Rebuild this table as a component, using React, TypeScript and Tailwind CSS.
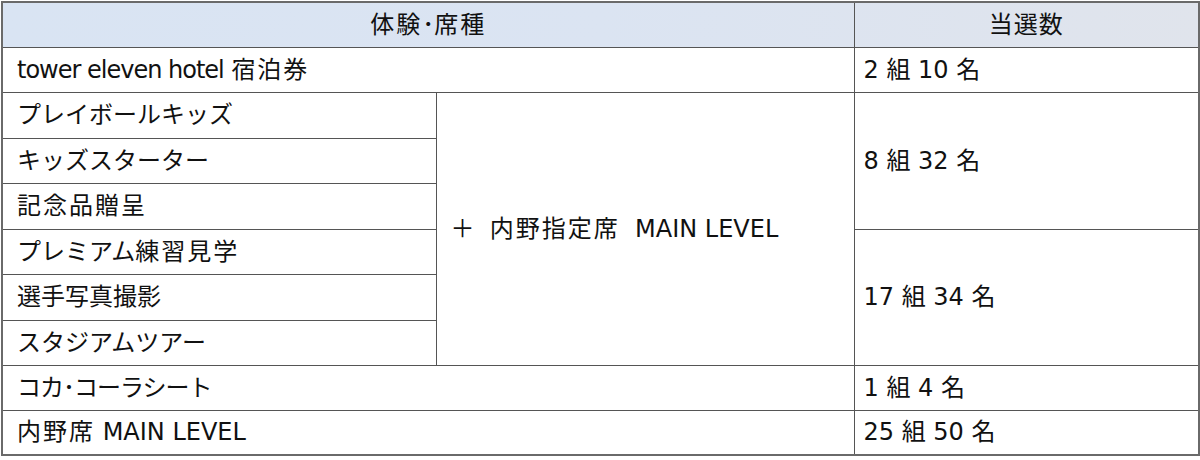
import React from "react";

const cell = "border border-[#555] px-[14px] align-middle text-left";
const num = "border border-[#555] pl-[9px] pr-[10px] align-middle text-left";

function K({ children }: { children: React.ReactNode }) {
  return <span className="tracking-[2px]">{children}</span>;
}

export default function App() {
  return (
    <div
      className="w-[1200px] h-[460px] bg-white pl-[1px] pt-[1px] text-[#111] text-[24px]"
      style={{ fontFamily: '"DejaVu Sans", "Noto Sans CJK JP", sans-serif' }}
    >
      <table className="w-[1197px] table-fixed border-collapse border-2 border-[#6a6a6a] leading-none">
        <colgroup>
          <col className="w-[434px]" />
          <col className="w-[418px]" />
          <col className="w-[345px]" />
        </colgroup>
        <tbody>
          <tr className="h-[45px] bg-linear-to-r from-[#d9e4f3] via-[#dbe4f2] to-[#e0e4ec]">
            <th colSpan={2} className="border border-[#555] font-normal text-center">
              <K>体験</K>･<K>席種</K>
            </th>
            <th className="border border-[#555] font-normal text-center">
              <span className="tracking-[1px]">当選数</span>
            </th>
          </tr>
          <tr className="h-[45px]">
            <td colSpan={2} className={cell}>
              <span className="tracking-[-1px]">tower eleven hotel</span> <K>宿泊券</K>
            </td>
            <td className={num}>2 組 10 名</td>
          </tr>
          <tr className="h-[46px]">
            <td className={cell}>プレイボールキッズ</td>
            <td rowSpan={6} className="border border-[#555] pl-[14px] align-middle text-left">
              ＋&nbsp; <K>内野指定席</K>&nbsp; MAIN LEVEL
            </td>
            <td rowSpan={3} className={num}>8 組 32 名</td>
          </tr>
          <tr className="h-[45px]">
            <td className={cell}>キッズスターター</td>
          </tr>
          <tr className="h-[46px]">
            <td className={cell}>
              <K>記念品贈呈</K>
            </td>
          </tr>
          <tr className="h-[45px]">
            <td className={cell}>
              プレミアム<K>練習見学</K>
            </td>
            <td rowSpan={3} className={num}>17 組 34 名</td>
          </tr>
          <tr className="h-[46px]">
            <td className={cell}>選手写真撮影</td>
          </tr>
          <tr className="h-[45px]">
            <td className={cell}>スタジアムツアー</td>
          </tr>
          <tr className="h-[45px]">
            <td colSpan={2} className={cell}>
              <span className="tracking-[-1px]">コカ･コーラシート</span>
            </td>
            <td className={num}>1 組 4 名</td>
          </tr>
          <tr className="h-[45px]">
            <td colSpan={2} className={cell}>
              <K>内野席</K> MAIN LEVEL
            </td>
            <td className={num}>25 組 50 名</td>
          </tr>
        </tbody>
      </table>
    </div>
  );
}
